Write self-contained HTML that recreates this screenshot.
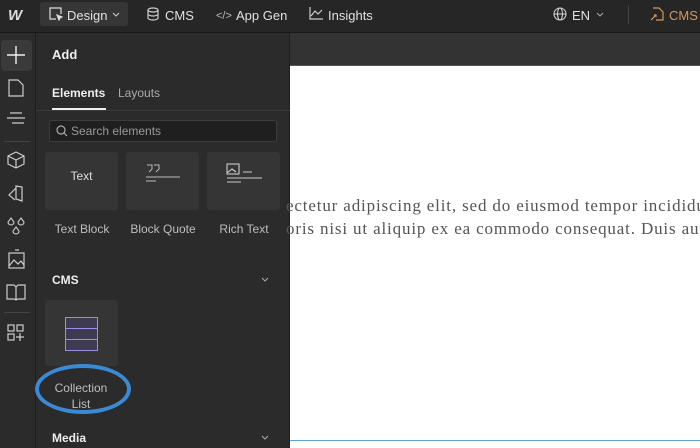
<!DOCTYPE html>
<html><head><meta charset="utf-8"><style>
*{margin:0;padding:0;box-sizing:border-box}
body{width:700px;height:448px;overflow:hidden;background:#fff;font-family:"Liberation Sans",sans-serif;position:relative}
.top{position:absolute;left:0;top:0;width:700px;height:33px;background:#262626;border-bottom:1px solid #1a1a1a}
.t{position:absolute;top:7px;color:#e0e0e0;font-size:13px;line-height:18px}
.side{position:absolute;left:0;top:33px;width:36px;height:415px;background:#2b2b2b;border-right:1px solid #1e1e1e}
.panel{position:absolute;left:36px;top:33px;width:254px;height:415px;background:#2b2b2b;border-right:1px solid #1e1e1e}
.bar2{position:absolute;left:290px;top:33px;width:410px;height:33px;background:#333;border-bottom:1px solid #555}
.card{position:absolute;width:73px;height:58px;background:#353535;border-radius:3px}
.lbl{position:absolute;color:#bdbdbd;font-size:12px;text-align:center;width:90px}
.h{position:absolute;color:#eee;font-size:12px;font-weight:bold}
.ser{position:absolute;left:286px;font-family:"Liberation Serif",serif;font-size:17px;letter-spacing:0.85px;color:#555;white-space:nowrap}
svg{position:absolute}
</style></head><body>
<div class="top">
<div class="t" style="left:8px;font-weight:bold;font-style:italic;color:#ddd;font-size:15px;letter-spacing:-2px">W</div>
<div style="position:absolute;left:40px;top:2px;width:88px;height:24px;background:#363636;border-radius:3px"></div>
<svg style="left:49px;top:7px" width="14" height="14" fill="none" stroke="#ddd" stroke-width="1.2"><path d="M12 7V1H1v11h6"/><path d="M8 8l5 2-2 1-1 2z" fill="#ddd"/></svg>
<div class="t" style="left:67px">Design</div>
<svg style="left:112px;top:12px" width="8" height="6" fill="none" stroke="#ccc"><path d="M1 1l3 3 3-3"/></svg>
<svg style="left:147px;top:7px" width="12" height="14" fill="none" stroke="#ccc" stroke-width="1.2"><ellipse cx="6" cy="3" rx="5" ry="2"/><path d="M1 3v8c0 1 2 2 5 2s5-1 5-2V3M1 7c0 1 2 2 5 2s5-1 5-2"/></svg>
<div class="t" style="left:165px">CMS</div>
<div class="t" style="left:216px;font-size:11px;color:#bbb">&lt;/&gt;</div>
<div class="t" style="left:236px">App Gen</div>
<svg style="left:309px;top:7px" width="14" height="13" fill="none" stroke="#ccc" stroke-width="1.2"><path d="M1 0v12h13M2 9l4-5 3 3 4-4"/></svg>
<div class="t" style="left:328px">Insights</div>
<svg style="left:553px;top:7px" width="14" height="14" fill="none" stroke="#ccc" stroke-width="1.1"><circle cx="7" cy="7" r="6"/><ellipse cx="7" cy="7" rx="2.5" ry="6"/><path d="M1 7h12"/></svg>
<div class="t" style="left:572px">EN</div>
<svg style="left:596px;top:12px" width="8" height="6" fill="none" stroke="#aaa"><path d="M1 1l3 3 3-3"/></svg>
<div style="position:absolute;left:628px;top:6px;width:1px;height:18px;background:#444"></div>
<svg style="left:650px;top:7px" width="14" height="14" fill="none" stroke="#d9965c" stroke-width="1.2"><path d="M3 1h6l4 4v8H6M1 13l5-5M4 8h2v2"/></svg>
<div class="t" style="left:669px;color:#d9965c">CMS</div>
</div>
<div class="bar2"></div>
<div class="side">
<div style="position:absolute;left:1px;top:7px;width:31px;height:31px;background:#3a3a3a;border-radius:4px"></div>
<svg style="left:7px;top:13px" width="18" height="18" stroke="#eee" stroke-width="1.4"><path d="M9 0v18M0 9h18"/></svg>
<svg style="left:8px;top:46px" width="16" height="18" fill="none" stroke="#ccc" stroke-width="1.2"><path d="M1 1h9l5 5v11H1z"/></svg>
<svg style="left:6px;top:79px" width="20" height="14" stroke="#ccc" stroke-width="1.2"><path d="M4 1h12M1 6h18M6 11h12"/></svg>
<div style="position:absolute;left:4px;top:108px;width:26px;height:1px;background:#444"></div>
<svg style="left:7px;top:118px" width="18" height="18" fill="none" stroke="#ccc" stroke-width="1.2"><path d="M9 1l8 4v8l-8 4-8-4V5zM1 5l8 4 8-4M9 9v8"/></svg>
<svg style="left:7px;top:151px" width="18" height="18" fill="none" stroke="#ccc" stroke-width="1.2"><path d="M9 2l6 1v14l-6-2zM9 4L2 11l6 5"/></svg>
<svg style="left:6px;top:184px" width="20" height="20" fill="none" stroke="#ccc" stroke-width="1.1"><path d="M5 1l3 4a3 3 0 1 1-6 0zM15 1l3 4a3 3 0 1 1-6 0zM10 10l3 4a3 3 0 1 1-6 0z"/></svg>
<svg style="left:6px;top:216px" width="20" height="20" fill="none" stroke="#ccc" stroke-width="1.2"><rect x="3" y="4" width="15" height="15"/><path d="M3 17l5-6 4 4 3-3 3 4"/><path d="M9 1h4"/></svg>
<svg style="left:6px;top:250px" width="20" height="18" fill="none" stroke="#ccc" stroke-width="1.2"><path d="M1 2h7l2 2 2-2h7v14h-7l-2 1-2-1H1zM10 4v13"/></svg>
<div style="position:absolute;left:4px;top:279px;width:26px;height:1px;background:#444"></div>
<svg style="left:7px;top:291px" width="18" height="18" fill="none" stroke="#ccc" stroke-width="1.2"><rect x="1" y="1" width="6" height="6"/><rect x="10" y="1" width="6" height="6"/><rect x="1" y="10" width="6" height="6"/><path d="M13 9v8M9 13h8"/></svg>
</div>
<div class="panel">
<div class="h" style="left:16px;top:14px;font-size:13px">Add</div>
<div class="h" style="left:16px;top:53px">Elements</div>
<div style="position:absolute;left:82px;top:53px;color:#aaa;font-size:12px">Layouts</div>
<div style="position:absolute;left:16px;top:75px;width:54px;height:2px;background:#eee"></div>
<div style="position:absolute;left:0;top:77px;width:254px;height:1px;background:#3c3c3c"></div>
<div style="position:absolute;left:13px;top:87px;width:228px;height:22px;background:#1f1f1f;border:1px solid #3c3c3c;border-radius:3px"></div>
<svg style="left:20px;top:92px" width="12" height="12" fill="none" stroke="#aaa" stroke-width="1.2"><circle cx="5" cy="5" r="4"/><path d="M8 8l3 3"/></svg>
<div style="position:absolute;left:35px;top:91px;color:#999;font-size:12px">Search elements</div>
<div class="card" style="left:9px;top:119px"></div>
<div style="position:absolute;left:9px;top:136px;width:73px;text-align:center;color:#ddd;font-size:12px">Text</div>
<div class="card" style="left:90px;top:119px"></div>
<svg style="left:109px;top:131px" width="36" height="22" fill="none" stroke="#bbb" stroke-width="1"><path d="M2 1h5v4l-3 3M9 1h5v4l-3 3M1 13h34M1 17h10"/></svg>
<div class="card" style="left:171px;top:119px"></div>
<svg style="left:190px;top:130px" width="38" height="22" fill="none" stroke="#ccc" stroke-width="1.1"><rect x="1" y="1" width="12" height="10"/><path d="M1 10l5-4 4 3M17 9h9M1 15h35M1 19h14"/></svg>
<div class="lbl" style="left:1px;top:189px">Text Block</div>
<div class="lbl" style="left:82px;top:189px">Block Quote</div>
<div class="lbl" style="left:163px;top:189px">Rich Text</div>
<div class="h" style="left:16px;top:240px">CMS</div>
<svg style="left:225px;top:244px" width="8" height="6" fill="none" stroke="#aaa"><path d="M1 1l3 3 3-3"/></svg>
<div class="card" style="left:9px;top:267px;height:66px"></div>
<div style="position:absolute;left:29px;top:284px;width:33px;height:34px;background:#3e3a52;border:1.2px solid #a08de0"></div>
<div style="position:absolute;left:29px;top:295px;width:33px;height:1px;background:#a08de0"></div>
<div style="position:absolute;left:29px;top:306px;width:33px;height:1px;background:#a08de0"></div>
<div class="lbl" style="left:0;top:347px;line-height:16px">Collection<br>List</div>
<div class="h" style="left:16px;top:398px">Media</div>
<svg style="left:225px;top:402px" width="8" height="6" fill="none" stroke="#aaa"><path d="M1 1l3 3 3-3"/></svg>
</div>
<div style="position:absolute;left:35px;top:364px;width:96px;height:50px;border:4px solid #3a8ad6;border-radius:50%"></div>
<div class="ser" style="top:196px">ectetur adipiscing elit, sed do eiusmod tempor incididunt</div>
<div class="ser" style="top:219px">oris nisi ut aliquip ex ea commodo consequat. Duis aute</div>
<div style="position:absolute;left:290px;top:440px;width:410px;height:1px;background:#5aa4d8"></div>
</body></html>
